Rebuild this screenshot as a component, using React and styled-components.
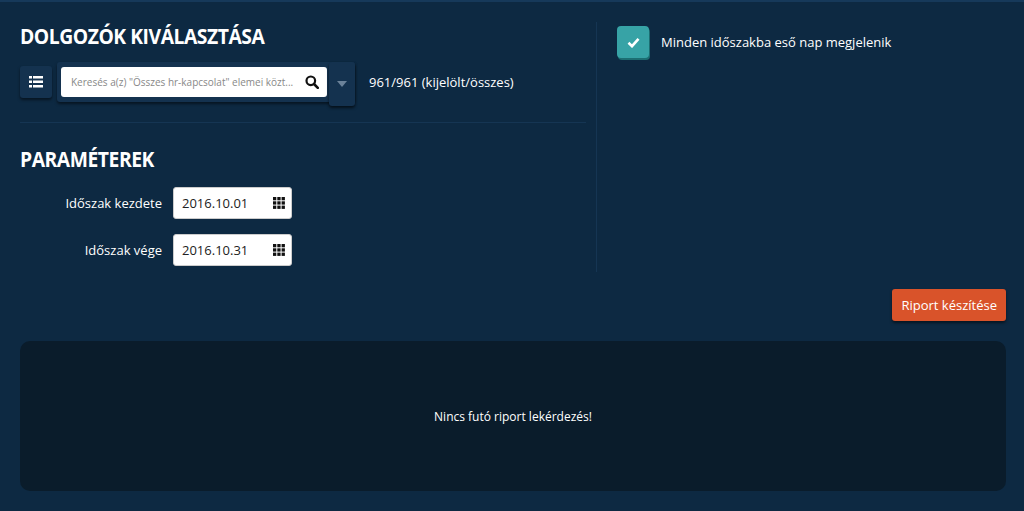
import React from "react";
import styled, { createGlobalStyle } from "styled-components";

const G = createGlobalStyle`
  html,body{margin:0;padding:0;background:#0d2942;}
  body{font-family:"Open Sans","DejaVu Sans",sans-serif;color:#fff;}
`;
const Page = styled.div`
  height:511px;box-sizing:border-box;border-top:2px solid #16395a;
  padding:20px 18px 0 20px;display:flex;flex-direction:column;
`;
const Top = styled.div`display:flex;height:250px;`;
const Left = styled.div`width:566px;display:flex;flex-direction:column;`;
const Divider = styled.div`width:1px;background:#153553;margin:0 20px 0 10px;`;
const Right = styled.div`flex:1;padding-top:4px;`;
const H = styled.h2`
  margin:0;font-family:"Open Sans",sans-serif;font-weight:700;font-size:21px;
  letter-spacing:-0.5px;transform:scaleX(0.92);transform-origin:left;line-height:28px;
`;
const Toolbar = styled.div`display:flex;align-items:center;margin-top:12px;gap:0;`;
const DarkBtn = styled.div`
  width:32px;height:32px;border-radius:3px;background:#14324f;
  box-shadow:0 2px 3px rgba(0,0,0,.5);display:flex;align-items:center;justify-content:center;
`;
const SearchWrap = styled.div`
  margin-left:5px;display:flex;height:40px;background:#14324f;border-radius:3px;
  box-shadow:0 2px 3px rgba(0,0,0,.5);align-items:center;padding-left:4px;
`;
const Search = styled.div`
  width:266px;height:30px;background:#fff;border-radius:3px;display:flex;align-items:center;
  padding:0 8px 0 10px;box-sizing:border-box;justify-content:space-between;
  font-size:10px;color:#888;
`;
const Drop = styled.div`
  width:26px;height:44px;margin-left:2px;background:#14324f;border-radius:3px;
  box-shadow:0 2px 3px rgba(0,0,0,.6);display:flex;align-items:center;justify-content:center;
  margin-top:4px;
`;
const Count = styled.span`font-size:13px;margin-left:14px;`;
const HLine = styled.div`height:1px;background:#153553;margin:20px 0 22px;`;
const Row = styled.div`display:flex;align-items:center;margin-top:${p=>p.mt}px;`;
const Label = styled.label`width:142px;text-align:right;font-size:13px;margin-right:11px;`;
const Input = styled.div`
  width:119px;height:32px;background:#fff;border-radius:3px;box-sizing:border-box;
  border:1px solid #ccc;display:flex;align-items:center;justify-content:space-between;
  padding:0 6px 0 8px;color:#222;font-size:13px;
`;
const Check = styled.div`
  width:32px;height:32px;border-radius:4px;background:#37a3a6;
  box-shadow:1px 2px 0 #1c6e72;display:flex;align-items:center;justify-content:center;
`;
const CheckRow = styled.div`display:flex;align-items:center;gap:12px;font-size:13px;`;
const BtnRow = styled.div`display:flex;justify-content:flex-end;margin-top:17px;`;
const Orange = styled.button`
  background:#d9532a;color:#fff;border:0;border-radius:3px;height:32px;padding:0 9px;
  font-family:"Open Sans",sans-serif;font-size:13px;box-shadow:0 2px 3px rgba(0,0,0,.5);
`;
const Panel = styled.div`
  margin-top:20px;height:150px;background:#0a1c2b;border-radius:10px;display:flex;
  align-items:center;justify-content:center;font-size:12px;
`;
const Grid = () => (
  <svg width="12" height="12" viewBox="0 0 12 12">
    {[0,4.3,8.6].map(x=>[0,4.3,8.6].map(y=><rect key={x+"-"+y} x={x} y={y} width="3.3" height="3.3" fill="#111"/>))}
  </svg>
);

export default function App(){
  return (<>
    <G/>
    <Page>
      <Top>
        <Left>
          <H>DOLGOZÓK KIVÁLASZTÁSA</H>
          <Toolbar>
            <DarkBtn>
              <svg width="14" height="12" viewBox="0 0 14 12" fill="#fff">
                <rect x="0" y="0" width="3" height="2.5"/><rect x="4" y="0" width="10" height="2.5"/>
                <rect x="0" y="4.5" width="3" height="2.5"/><rect x="4" y="4.5" width="10" height="2.5"/>
                <rect x="0" y="9" width="3" height="2.5"/><rect x="4" y="9" width="10" height="2.5"/>
              </svg>
            </DarkBtn>
            <SearchWrap>
              <Search>
                <span>Keresés a(z) "Összes hr-kapcsolat" elemei közt...</span>
                <svg width="14" height="14" viewBox="0 0 14 14"><circle cx="5.8" cy="5.8" r="4.3" stroke="#111" strokeWidth="2.2" fill="none"/><path d="M9 9l3.8 3.8" stroke="#111" strokeWidth="2.6" strokeLinecap="round"/></svg>
              </Search>
              <Drop><svg width="10" height="6"><path d="M0 0h10L5 6z" fill="#6b8299"/></svg></Drop>
            </SearchWrap>
            <Count>961/961 (kijelölt/összes)</Count>
          </Toolbar>
          <HLine/>
          <H>PARAMÉTEREK</H>
          <Row mt={14}><Label>Időszak kezdete</Label><Input>2016.10.01<Grid/></Input></Row>
          <Row mt={15}><Label>Időszak vége</Label><Input>2016.10.31<Grid/></Input></Row>
        </Left>
        <Divider/>
        <Right>
          <CheckRow>
            <Check><svg width="13" height="11" viewBox="0 0 13 11"><path d="M1.5 5.8l3.5 3.4L11.5 1.8" stroke="#fff" strokeWidth="2.6" fill="none"/></svg></Check>
            Minden időszakba eső nap megjelenik
          </CheckRow>
        </Right>
      </Top>
      <BtnRow><Orange>Riport készítése</Orange></BtnRow>
      <Panel>Nincs futó riport lekérdezés!</Panel>
    </Page>
  </>);
}
